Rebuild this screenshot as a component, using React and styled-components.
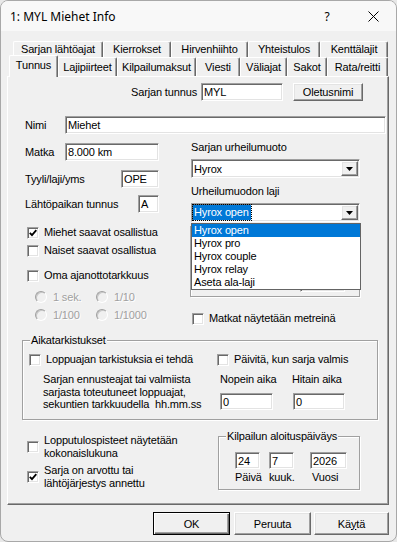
import React from 'react';
import styled, { createGlobalStyle, css } from 'styled-components';

const Global = createGlobalStyle`
  * { box-sizing: border-box; }
  html, body { margin: 0; padding: 0; background: #e8e8e8; }
  body {
    font-family: "Liberation Sans", Arial, sans-serif;
    font-size: 11px;
    letter-spacing: -0.15px;
    color: #000;
  }
`;

const sunken = css`
  border: 1px solid;
  border-color: #a0a0a0 #ffffff #ffffff #a0a0a0;
  box-shadow: inset 1px 1px 0 #696969, inset -1px -1px 0 #e3e3e3;
  background: #fff;
`;

const raised = css`
  border: 1px solid;
  border-color: #ffffff #696969 #696969 #ffffff;
  box-shadow: inset -1px -1px 0 #a0a0a0, inset 1px 1px 0 #e3e3e3;
  background: #f0f0f0;
`;

const etched = css`
  border: 1px solid #a0a0a0;
  box-shadow: inset 1px 1px 0 #fff, 1px 1px 0 #fff;
`;

const Window = styled.div`
  width: 397px;
  height: 542px;
  border: 1px solid #a8a8a8;
  border-radius: 8px;
  background: #f0f0f0;
  overflow: hidden;
  display: flex;
  flex-direction: column;
`;

const TitleBar = styled.div`
  height: 30px;
  flex: none;
  display: flex;
  align-items: center;
  background: #f8f8f8;
  padding-left: 9px;
  font-family: "Noto Sans", "Open Sans", sans-serif;
  font-size: 12px;
  letter-spacing: 0;
`;

const Title = styled.div`
  flex: 1;
`;

const CaptionBtn = styled.div`
  width: 46px;
  height: 30px;
  display: flex;
  align-items: center;
  justify-content: center;
`;

const Body = styled.div`
  flex: 1;
  padding: 10px 7px 0 6px;
  display: flex;
  flex-direction: column;
`;

const TabRow = styled.div`
  display: flex;
  align-items: flex-end;
  height: ${p => p.$h}px;
  margin-left: ${p => p.$indent}px;
`;

const Tab = styled.div`
  width: ${p => p.$w}px;
  height: 100%;
  flex: none;
  border-top: 1px solid #fff;
  border-left: 1px solid #fff;
  border-right: 1px solid #696969;
  box-shadow: inset -1px 0 0 #a0a0a0;
  border-radius: 2px 2px 0 0;
  display: flex;
  align-items: center;
  justify-content: center;
  white-space: nowrap;
  padding-bottom: 1px;
`;

const ActiveTab = styled(Tab)`
  height: 22px;
  margin-bottom: -1px;
  position: relative;
  z-index: 1;
  background: #f0f0f0;
  padding-bottom: 4px;
`;

const Panel = styled.div`
  height: 429px;
  flex: none;
  border-top: 1px solid #fff;
  border-left: 1px solid #fff;
  border-right: 1px solid #696969;
  border-bottom: 1px solid #696969;
  box-shadow: inset -1px -1px 0 #a0a0a0;
  padding: 6px 2px 0 17px;
  display: flex;
  flex-direction: column;
`;

const TunnusRow = styled.div`
  display: flex;
  align-items: center;
  justify-content: flex-end;
  height: 18px;
  padding-right: 23px;
`;

const RowLabel = styled.div`
  line-height: 13px;
  white-space: nowrap;
  width: ${p => (p.$w ? `${p.$w}px` : 'auto')};
  margin-right: ${p => p.$mr || 0}px;
`;

const TextBox = styled.div`
  ${sunken};
  width: ${p => (p.$w ? `${p.$w}px` : 'auto')};
  flex: ${p => (p.$grow ? 1 : 'none')};
  height: ${p => p.$h || 18}px;
  padding-left: 2px;
  display: flex;
  align-items: center;
  white-space: nowrap;
  margin-left: ${p => p.$ml || 0}px;
  margin-top: ${p => p.$mt || 0}px;
`;

const Button = styled.div`
  ${raised};
  width: ${p => p.$w}px;
  height: ${p => p.$h || 23}px;
  margin-left: ${p => p.$ml || 0}px;
  display: flex;
  align-items: center;
  justify-content: center;
  white-space: nowrap;
  ${p =>
    p.$default &&
    css`
      border: 1px solid #000;
      box-shadow: inset 1px 1px 0 #fff, inset -1px -1px 0 #696969, inset -2px -2px 0 #a0a0a0;
    `}
`;

const NimiRow = styled.div`
  display: flex;
  align-items: center;
  margin-top: 15px;
`;

const Columns = styled.div`
  display: grid;
  grid-template-columns: 134px 169px;
  column-gap: 32px;
  align-items: start;
`;

const Col = styled.div`
  display: flex;
  flex-direction: column;
  padding-top: ${p => p.$pt || 0}px;
`;

const FieldRow = styled.div`
  display: flex;
  align-items: center;
  justify-content: space-between;
  margin-top: ${p => p.$mt || 0}px;
`;

const CheckRow = styled.div`
  display: flex;
  align-items: center;
  min-height: 13px;
  margin-top: ${p => p.$mt || 0}px;
  margin-left: ${p => (p.$ml === undefined ? 2 : p.$ml)}px;
  width: ${p => (p.$w ? `${p.$w}px` : 'auto')};
  flex: none;
`;

const Box = styled.div`
  ${sunken};
  width: 12px;
  height: 12px;
  flex: none;
  display: flex;
  align-items: center;
  justify-content: center;
  margin-right: 5px;
`;

const CheckText = styled.div`
  line-height: 13px;
  white-space: nowrap;
`;

const RadioRow = styled.div`
  display: flex;
  align-items: center;
  height: 13px;
  padding-left: 10px;
  margin-top: ${p => p.$mt || 0}px;
`;

const Radio = styled.div`
  display: flex;
  align-items: center;
  width: ${p => (p.$w ? `${p.$w}px` : 'auto')};
  color: #a0a0a0;
  text-shadow: 1px 1px 0 #fff;
`;

const RadioDot = styled.div`
  width: 12px;
  height: 12px;
  border-radius: 50%;
  border: 1px solid;
  border-color: #a0a0a0 #fff #fff #a0a0a0;
  box-shadow: inset 1px 1px 0 #c8c8c8;
  background: #f0f0f0;
  margin-right: 6px;
  flex: none;
`;

const ColLabel = styled.div`
  line-height: 13px;
  margin-top: ${p => p.$mt || 0}px;
`;

const Combo = styled.div`
  ${sunken};
  height: 19px;
  margin-top: ${p => p.$mt || 0}px;
  display: flex;
  align-items: center;
  padding-left: ${p => p.$pl || 2}px;
  position: relative;
`;

const ArrowBtn = styled.div`
  ${raised};
  width: 17px;
  height: 15px;
  margin-left: auto;
  margin-right: 1px;
  display: flex;
  align-items: center;
  justify-content: center;
`;

const Selected = styled.span`
  background: #0078d7;
  color: #fff;
  height: 15px;
  line-height: 15px;
  padding: 0 2px 0 1px;
  outline: 1px dotted #000;
  outline-offset: 0;
`;

const DropList = styled.div`
  position: absolute;
  left: -1px;
  top: 19px;
  width: 170px;
  border: 1px solid #646464;
  background: #fff;
  z-index: 5;
`;

const DropItem = styled.div`
  height: 13px;
  line-height: 13px;
  padding-left: 2px;
  white-space: nowrap;
  ${p =>
    p.$sel &&
    css`
      background: #0078d7;
      color: #fff;
    `}
`;

const HiddenGroup = styled.div`
  ${etched};
  margin-top: 4px;
  margin-left: -1px;
  width: 170px;
  height: 71px;
  display: flex;
  justify-content: flex-end;
  align-items: flex-end;
  padding: 0 14px 4px 0;
`;

const GroupBox = styled.div`
  ${etched};
  position: relative;
  width: ${p => p.$w}px;
  height: ${p => p.$h}px;
  margin-top: ${p => p.$mt || 0}px;
  margin-left: ${p => p.$ml || 0}px;
  padding: ${p => p.$pad};
  flex: none;
`;

const GroupLabel = styled.div`
  position: absolute;
  top: -7px;
  left: 7px;
  line-height: 13px;
  padding: 0 1px;
  background: #f0f0f0;
  white-space: nowrap;
`;

const Flex = styled.div`
  display: flex;
  align-items: flex-start;
  margin-top: ${p => p.$mt || 0}px;
`;

const TextBlock = styled.div`
  width: ${p => p.$w}px;
  padding-left: ${p => p.$pl || 0}px;
  line-height: 12.5px;
  white-space: nowrap;
  flex: none;
`;

const MiniCol = styled.div`
  display: flex;
  flex-direction: column;
  width: ${p => (p.$w ? `${p.$w}px` : 'auto')};
  flex: none;
`;

const BottomLeft = styled.div`
  width: 193px;
  flex: none;
  padding-top: 14px;
  display: flex;
  flex-direction: column;
`;

const SmallLabel = styled.div`
  line-height: 13px;
  margin-top: ${p => p.$mt || 0}px;
  padding-left: ${p => p.$pl || 0}px;
  white-space: nowrap;
`;

const ButtonRow = styled.div`
  display: flex;
  justify-content: flex-end;
  margin-top: 7px;
`;

const Check = () => (
  <svg width="8" height="8" viewBox="0 0 8 8">
    <polyline points="0.8,3.8 3,6.2 7.3,1.2" fill="none" stroke="#000" strokeWidth="1.8" />
  </svg>
);

const Arrow = () => (
  <svg width="7" height="4" viewBox="0 0 7 4">
    <polygon points="0,0 7,0 3.5,4" fill="#000" />
  </svg>
);

const CheckBox = ({ checked, children, ...rest }) => (
  <CheckRow {...rest}>
    <Box>{checked && <Check />}</Box>
    <CheckText>{children}</CheckText>
  </CheckRow>
);

const row1 = [
  ['Sarjan lähtöajat', 90],
  ['Kierrokset', 68],
  ['Hirvenhiihto', 77],
  ['Yhteistulos', 72],
  ['Kenttälajit', 68],
];

const row2 = [
  ['Lajipiirteet', 59],
  ['Kilpailumaksut', 79],
  ['Viesti', 44],
  ['Väliajat', 47],
  ['Sakot', 40],
  ['Rata/reitti', 61],
];

const laji = ['Hyrox open', 'Hyrox pro', 'Hyrox couple', 'Hyrox relay', 'Aseta ala-laji'];

export default function App() {
  return (
    <>
      <Global />
      <Window>
        <TitleBar>
          <Title>1: MYL Miehet Info</Title>
          <CaptionBtn>?</CaptionBtn>
          <CaptionBtn>
            <svg width="11" height="11" viewBox="0 0 11 11">
              <path d="M0.5 0.5 L10.5 10.5 M10.5 0.5 L0.5 10.5" stroke="#000" strokeWidth="1" />
            </svg>
          </CaptionBtn>
        </TitleBar>
        <Body>
          <TabRow $h={16} $indent={6}>
            {row1.map(([t, w]) => (
              <Tab key={t} $w={w}>{t}</Tab>
            ))}
          </TabRow>
          <TabRow $h={19} $indent={2}>
            <ActiveTab $w={49}>Tunnus</ActiveTab>
            {row2.map(([t, w]) => (
              <Tab key={t} $w={w}>{t}</Tab>
            ))}
          </TabRow>
          <Panel>
            <TunnusRow>
              <RowLabel $mr={4}>Sarjan tunnus</RowLabel>
              <TextBox $w={82}>MYL</TextBox>
              <Button $w={70} $h={18} $ml={10}>Oletusnimi</Button>
            </TunnusRow>
            <NimiRow>
              <RowLabel $w={40}>Nimi</RowLabel>
              <TextBox $grow>Miehet</TextBox>
            </NimiRow>
            <Columns>
              <Col $pt={9}>
                <FieldRow>
                  <RowLabel>Matka</RowLabel>
                  <TextBox $w={94}>8.000 km</TextBox>
                </FieldRow>
                <FieldRow $mt={9}>
                  <RowLabel>Tyyli/laji/yms</RowLabel>
                  <TextBox $w={38}>OPE</TextBox>
                </FieldRow>
                <FieldRow $mt={7}>
                  <RowLabel>Lähtöpaikan tunnus</RowLabel>
                  <TextBox $w={21}>A</TextBox>
                </FieldRow>
                <CheckBox checked $mt={13}>Miehet saavat osallistua</CheckBox>
                <CheckBox $mt={5}>Naiset saavat osallistua</CheckBox>
                <CheckBox $mt={12}>Oma ajanottotarkkuus</CheckBox>
                <RadioRow $mt={8}>
                  <Radio $w={61}><RadioDot />1 sek.</Radio>
                  <Radio><RadioDot />1/10</Radio>
                </RadioRow>
                <RadioRow $mt={5}>
                  <Radio $w={61}><RadioDot />1/100</Radio>
                  <Radio><RadioDot />1/1000</Radio>
                </RadioRow>
              </Col>
              <Col>
                <ColLabel $mt={7}>Sarjan urheilumuoto</ColLabel>
                <Combo $mt={5}>
                  Hyrox
                  <ArrowBtn><Arrow /></ArrowBtn>
                </Combo>
                <ColLabel $mt={7}>Urheilumuodon laji</ColLabel>
                <Combo $mt={5} $pl={1}>
                  <Selected>Hyrox open</Selected>
                  <ArrowBtn><Arrow /></ArrowBtn>
                  <DropList>
                    {laji.map((l, i) => (
                      <DropItem key={l} $sel={i === 0}>{l}</DropItem>
                    ))}
                  </DropList>
                </Combo>
                <HiddenGroup>
                  <TextBox $w={45} />
                </HiddenGroup>
                <CheckBox $mt={15} $ml={1}>Matkat näytetään metreinä</CheckBox>
              </Col>
            </Columns>
            <GroupBox $w={356} $h={80} $mt={15} $ml={-3} $pad="12px 0 0 6px">
              <GroupLabel>Aikatarkistukset</GroupLabel>
              <Flex>
                <CheckBox $ml={0} $w={188}>Loppuajan tarkistuksia ei tehdä</CheckBox>
                <CheckBox $ml={0}>Päivitä, kun sarja valmis</CheckBox>
              </Flex>
              <Flex $mt={7}>
                <TextBlock $w={191} $pl={14}>
                  Sarjan ennusteajat tai valmiista
                  <br />
                  sarjasta toteutuneet loppuajat,
                  <br />
                  sekuntien tarkkuudella&nbsp; hh.mm.ss
                </TextBlock>
                <MiniCol $w={72}>
                  <SmallLabel>Nopein aika</SmallLabel>
                  <TextBox $w={53} $h={17} $mt={7}>0</TextBox>
                </MiniCol>
                <MiniCol>
                  <SmallLabel>Hitain aika</SmallLabel>
                  <TextBox $w={52} $h={17} $ml={1} $mt={7}>0</TextBox>
                </MiniCol>
              </Flex>
            </GroupBox>
            <Flex>
              <BottomLeft>
                <CheckBox>
                  Lopputulospisteet näytetään
                  <br />
                  kokonaislukuna
                </CheckBox>
                <CheckBox checked $mt={4}>
                  Sarja on arvottu tai
                  <br />
                  lähtöjärjestys annettu
                </CheckBox>
              </BottomLeft>
              <GroupBox $w={142} $h={54} $mt={16} $pad="15px 0 0 16px">
                <GroupLabel>Kilpailun aloituspäiväys</GroupLabel>
                <Flex>
                  <MiniCol $w={34}>
                    <TextBox $w={25} $h={17}>24</TextBox>
                    <SmallLabel $mt={2}>Päivä</SmallLabel>
                  </MiniCol>
                  <MiniCol $w={41}>
                    <TextBox $w={25} $h={17}>7</TextBox>
                    <SmallLabel $mt={2}>kuuk.</SmallLabel>
                  </MiniCol>
                  <MiniCol>
                    <TextBox $w={37} $h={17}>2026</TextBox>
                    <SmallLabel $mt={2} $pl={2}>Vuosi</SmallLabel>
                  </MiniCol>
                </Flex>
              </GroupBox>
            </Flex>
          </Panel>
          <ButtonRow>
            <Button $w={77} $default>OK</Button>
            <Button $w={77} $ml={4}>Peruuta</Button>
            <Button $w={75} $ml={3}>Kä<u>y</u>tä</Button>
          </ButtonRow>
        </Body>
      </Window>
    </>
  );
}
